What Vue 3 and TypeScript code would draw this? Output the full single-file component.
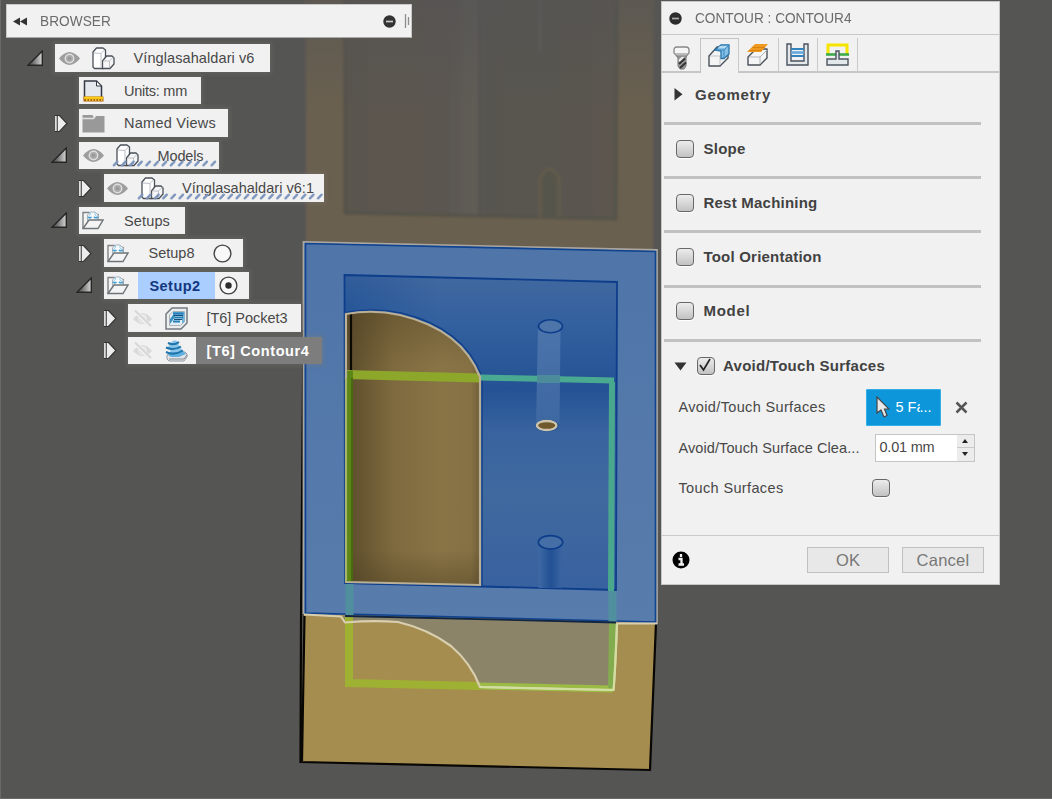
<script setup lang="ts">
import type { Directive } from 'vue'

interface TreeNode {
  label: string
  level: number
  arrow: 'open' | 'closed' | 'none'
  eye?: 'on' | 'off'
  icon: 'part' | 'units' | 'folder' | 'setup' | 'pocket' | 'contour'
  width: number
  text: number
  radio?: 'on' | 'off'
  linked?: boolean
  state?: 'active' | 'selected'
}

const nodes: TreeNode[] = [
  { label: 'Vínglasahaldari v6', level: 0, arrow: 'open', eye: 'on', icon: 'part', width: 215, text: 121 },
  { label: 'Units: mm', level: 1, arrow: 'none', icon: 'units', width: 122, text: 63 },
  { label: 'Named Views', level: 1, arrow: 'closed', icon: 'folder', width: 149, text: 92 },
  { label: 'Models', level: 1, arrow: 'open', eye: 'on', icon: 'part', width: 139.5, text: 46, linked: true },
  { label: 'Vínglasahaldari v6:1', level: 2, arrow: 'closed', eye: 'on', icon: 'part', width: 220.5, text: 132, linked: true },
  { label: 'Setups', level: 1, arrow: 'open', icon: 'setup', width: 105.5, text: 46 },
  { label: 'Setup8', level: 2, arrow: 'closed', icon: 'setup', width: 139.5, text: 46, radio: 'off' },
  { label: 'Setup2', level: 2, arrow: 'open', icon: 'setup', width: 145, text: 51, radio: 'on', state: 'active' },
  { label: '[T6] Pocket3', level: 3, arrow: 'closed', eye: 'off', icon: 'pocket', width: 172.5, text: 81 },
  { label: '[T6] Contour4', level: 3, arrow: 'closed', eye: 'off', icon: 'contour', width: 193.5, text: 103, state: 'selected' },
]

const sections = [
  { label: 'Slope', text: 42 },
  { label: 'Rest Machining', text: 114 },
  { label: 'Tool Orientation', text: 118 },
  { label: 'Model', text: 47 },
]

// Tracks a label out to a given width in pixels.
const vTrack: Directive<HTMLElement, number> = {
  mounted(el, { value }) {
    const count = (el.textContent ?? '').length
    el.style.letterSpacing = `${(value - el.getBoundingClientRect().width) / count}px`
  },
}
</script>

<template>
  <div class="stage">
    <svg class="scene" viewBox="0 0 1052 799" width="1052" height="799">
      <defs>
        <linearGradient id="wood" x1="0" x2="1" y1="0" y2="0">
          <stop offset="0" stop-color="#5b4c2d" />
          <stop offset=".14" stop-color="#695832" />
          <stop offset=".35" stop-color="#7e6a3e" />
          <stop offset=".7" stop-color="#897446" />
          <stop offset=".93" stop-color="#857144" />
          <stop offset="1" stop-color="#6f5d37" />
        </linearGradient>
        <linearGradient id="woodEnds" x1="0" x2="0" y1="0" y2="1">
          <stop offset="0" stop-color="#4a3c20" stop-opacity=".35" />
          <stop offset=".2" stop-color="#4a3c20" stop-opacity="0" />
          <stop offset=".87" stop-color="#4a3c20" stop-opacity="0" />
          <stop offset="1" stop-color="#4a3c20" stop-opacity=".4" />
        </linearGradient>
        <linearGradient id="floor" x1="0" x2="0" y1="0" y2="1">
          <stop offset="0" stop-color="#42699f" />
          <stop offset=".14" stop-color="#34619f" />
          <stop offset=".36" stop-color="#245294" />
          <stop offset=".5" stop-color="#38639e" />
          <stop offset=".7" stop-color="#40699f" />
          <stop offset="1" stop-color="#38629f" />
        </linearGradient>
        <radialGradient id="corner" cx="0" cy=".1" r=".35">
          <stop offset="0" stop-color="#184a91" stop-opacity=".5" />
          <stop offset="1" stop-color="#184a91" stop-opacity="0" />
        </radialGradient>
        <linearGradient id="rim" x1="0" x2="0" y1="0" y2="1">
          <stop offset="0" stop-color="#4f75a9" />
          <stop offset="1" stop-color="#587cab" />
        </linearGradient>
        <linearGradient id="pin" x1="0" x2="0" y1="0" y2="1">
          <stop offset="0" stop-color="#4f77ad" />
          <stop offset="1" stop-color="#3f69a3" />
        </linearGradient>
        <linearGradient id="pinLow" x1="0" x2="1" y1="0" y2="0">
          <stop offset="0" stop-color="#3e69a4" />
          <stop offset=".55" stop-color="#215093" />
          <stop offset="1" stop-color="#3963a1" />
        </linearGradient>
        <linearGradient id="ghostPocket" x1="0" x2="1" y1="0" y2="0">
          <stop offset="0" stop-color="#5a554e" />
          <stop offset=".38" stop-color="#5b5751" />
          <stop offset=".48" stop-color="#605d57" />
          <stop offset=".52" stop-color="#575550" />
          <stop offset="1" stop-color="#5b5750" />
        </linearGradient>
        <linearGradient id="haze" x1="0" x2="0" y1="0" y2="1">
          <stop offset="0" stop-color="#545454" stop-opacity=".6" />
          <stop offset="1" stop-color="#545454" stop-opacity="0" />
        </linearGradient>
        <filter id="soft" x="-20%" y="-20%" width="140%" height="140%"><feGaussianBlur stdDeviation="1.4" /></filter>
        <filter id="glow" x="-20%" y="-20%" width="140%" height="140%"><feGaussianBlur stdDeviation=".7" /></filter>
      </defs>
      <rect width="1052" height="799" fill="#555554" />
      <path d="M.5 0V799M0 798.500H1052" stroke="#6a6a6a" fill="none" />

      <g filter="url(#soft)">
        <path d="M306-5H653V256L306 248Z" fill="#6a604f" />
        <path d="M345-5H617L616 219L345 213Z" fill="url(#ghostPocket)" stroke="#535149" stroke-width="3" />
        <path d="M480-5V215" stroke="#54534f" stroke-width="3" />
        <path d="M540 217V178Q549 160 559 178V217" fill="#57544b" stroke="#645c4c" stroke-width="3" />
        <path d="M540-5V52" stroke="#605e58" stroke-width="3" />
      </g>
      <rect x="306" y="0" width="347" height="110" fill="url(#haze)" />

      <path d="M304 614L656 622L650 770L300.500 761.500Z" fill="#a58c4f" />
      <path d="M343 615.500L617 622L613.500 690L480 687Q470 663 450 646Q420 623 380 621L345 622.500Z" fill="#8b8468" />
      <path d="M303.500 330L301 620L300.500 762L650 770L656 623M304.500 616L302 761" fill="none" stroke="#080704" stroke-width="2.200" />

      <path d="M304 243L657 251V623L304 614Z" fill="url(#rim)" />
      <path d="M303.500 614V242L657 250V624" fill="none" stroke="#aaa6a0" stroke-width="1.800" />
      <path d="M305.500 613V243.500L655.500 251.500V622Z" fill="none" stroke="#104390" stroke-width="1.600" />
      <path d="M344.500 275L617 282L616 590L345 583Z" fill="url(#floor)" />
      <path d="M344.500 275L617 282L616 590L345 583Z" fill="url(#corner)" />
      <path d="M344.500 275L617 282L616 590L345 583Z" fill="none" stroke="#0e3e8b" stroke-width="1.800" />

      <path d="M538 327L560.500 330L559.500 424H536Z" fill="url(#pin)" opacity=".9" />
      <ellipse cx="550.500" cy="326.300" rx="12" ry="6.500" fill="#4d75aa" stroke="#0d3d8a" stroke-width="1.600" />
      <ellipse cx="547" cy="425.500" rx="11.500" ry="6" fill="#174485" />
      <ellipse cx="546.700" cy="425.500" rx="9.700" ry="4.500" fill="#70592b" stroke="#cdc4ad" stroke-width="2.300" />
      <path d="M538.500 547H561V588H538.500Z" fill="url(#pinLow)" />
      <ellipse cx="550.500" cy="542.300" rx="12.200" ry="6.700" fill="#446ea5" stroke="#0d3d8a" stroke-width="1.600" />

      <path d="M346 314Q373 309 400 315Q462 330 480.500 377V585L346 582Z" fill="url(#wood)" />
      <path d="M346 314Q373 309 400 315Q462 330 480.500 377V585L346 582Z" fill="url(#woodEnds)" />
      <path d="M351 314V582" stroke="#0b0a02" stroke-width="2.200" />
      <path d="M345 312.500Q373 307 401 313Q464 328 482 377V586L345 583" fill="none" stroke="#103f8b" stroke-width="1.400" />

      <g filter="url(#glow)" fill="none">
        <path d="M345 374.500L480 378" stroke="#8da72c" stroke-width="9" />
        <path d="M480 377.500L614 380.500" stroke="#4aaa91" stroke-width="6" />
        <path d="M537 379H560" stroke="#4b8b9a" stroke-width="8" />
        <path d="M349.500 371V582" stroke="#5c8714" stroke-width="7" />
        <path d="M349.500 584V616" stroke="#508f9e" stroke-width="8" />
        <path d="M612 382L611 591" stroke="#49a78d" stroke-width="6" />
        <path d="M612.500 591V622" stroke="#508f9e" stroke-width="8" />
        <path d="M349 617V683L480 686" stroke="#9eb132" stroke-width="8" />
        <path d="M480 686L613 689" stroke="#9abb44" stroke-width="7" />
        <path d="M612.500 623L611.500 688" stroke="#83ac50" stroke-width="7" />
      </g>
      <path d="M352 378V582" stroke="#38590c" stroke-width="1.200" />
      <path d="M346 314Q373 309 400 315Q462 330 480 377V585L346 582Z" fill="none" stroke="#bab097" stroke-width="2.200" />
      <path d="M346 378V582" stroke="#a7b56c" stroke-width="2" />
      <path d="M345 616L616 622.500" stroke="#122540" stroke-width="1.800" />
      <path d="M304 614.500L341 616.500L345 622.500Q373 620 398 622Q428 629 451 646Q471 663 480 687L613.500 690Q615 676 617 623.500H657" fill="none" stroke="#d9cfaf" stroke-width="2.200" stroke-linejoin="round" />
      <path d="M480 687L613.500 690Q615 676 617 624" fill="none" stroke="#d3dfa0" stroke-width="2" />
    </svg>

    <aside class="browser">
      <header class="browser-bar">
        <svg class="rewind" width="15" height="9" viewBox="0 0 15 9"><path d="M7 .500V8.500L0 4.500ZM14 .500V8.500L7 4.500Z" fill="#333" /></svg>
        <span v-track="71" class="caption">BROWSER</span>
        <svg class="minus" width="13" height="13" viewBox="0 0 13 13"><circle cx="6.500" cy="6.500" r="6.200" fill="#333" /><path d="M3 6.500H10" stroke="#ccc" stroke-width="1.700" /></svg>
        <svg class="grip" width="6" height="16" viewBox="0 0 6 16"><path d="M1.500 1V15M4.500 4V12" stroke="#8d8d8d" stroke-width="1.300" /></svg>
      </header>
      <ul class="tree">
        <li v-for="n in nodes" :key="n.label" :class="['row', `level-${n.level}`]">
          <span class="toggle">
            <svg v-if="n.arrow === 'open'" width="17" height="17" viewBox="0 0 17 17"><path d="M15.300 1V15.300H1Z" fill="url(#arrowFill)" stroke="#262626" stroke-width="1.400" /></svg>
            <svg v-else-if="n.arrow === 'closed'" class="shut" width="17" height="19" viewBox="0 0 17 19"><path d="M2.500 1.500H6.500L14 9.500L6.500 17.500H2.500Z" fill="#ededed" stroke="#333" stroke-width="1.200" /><path d="M2.700 2V17" stroke="#e6e6e6" stroke-width="1.300" /><path d="M4.300 2V17" stroke="#444" stroke-width="1.100" /></svg>
          </span>
          <div :class="['item', n.state]" :style="{ width: `${n.width}px` }">
            <svg v-if="n.linked" class="hatch" :width="n.width - 33" height="7">
              <defs><pattern :id="`hatch-${n.level}`" width="8.150" height="7" patternUnits="userSpaceOnUse"><path d="M1.800 5.300L5.300 1.700" stroke="#7d95bd" stroke-width="2.400" stroke-linecap="round" /></pattern></defs>
              <rect width="100%" height="7" :fill="`url(#hatch-${n.level})`" />
            </svg>
            <span v-if="n.eye" class="slot">
              <svg v-if="n.eye === 'on'" width="23" height="15" viewBox="0 0 23 15"><path d="M1 7.500Q11.500-5.500 22 7.500Q11.500 20.500 1 7.500Z" fill="#9d9d9d" /><circle cx="11.500" cy="7.500" r="4.200" fill="#aaa" stroke="#dedede" stroke-width="1.500" /><circle cx="11.500" cy="7.500" r="1.700" fill="#999" /></svg>
              <svg v-else width="23" height="19" viewBox="0 0 23 19"><path d="M2 10Q11.500-2 21 10Q11.500 20 2 10Z" fill="#dadada" /><circle cx="11.500" cy="9.500" r="3.500" fill="#dcdcdc" stroke="#efefef" stroke-width="1.300" /><path d="M3 .800L20 18" stroke="#f1f1f1" stroke-width="4" /><path d="M4 1.500L20 17" stroke="#d7d7d7" stroke-width="2" /></svg>
            </span>
            <span :class="['slot', { wide: n.eye }]">
              <svg v-if="n.icon === 'part'" width="23" height="23" viewBox="0 0 23 23"><g stroke="#4b5059" stroke-width="1.300" stroke-linejoin="round"><path d="M1 5L4.500 1H11L13.500 3V19L11 21.500H2.500L1 20Z" fill="#fff" /><path d="M10.500 14L14.500 9H20L22 11V17L18 21.500H10.500Z" fill="#f6f6f6" /></g><path d="M2 6L9 6.500L12.500 3M9 6.500V20M11.500 14H17.500L21 10.500M17.500 14V21" stroke="#bcc0c7" fill="none" /></svg>
              <svg v-else-if="n.icon === 'units'" width="21" height="22" viewBox="0 0 21 22"><path d="M1.500 19V1H13.500L18.500 6V19" fill="#e5e9ed" stroke="#343a45" stroke-width="1.500" /><path d="M13.500 1V6H18.500Z" fill="#fff" stroke="#343a45" /><rect x=".5" y="16.500" width="20" height="5" fill="#ae6200" /><path d="M1 17.800H20" stroke="#ffce13" stroke-width="2.200" /><path d="M3 20H20" stroke="#ffe04a" stroke-dasharray="1.500 1.500" stroke-width="1.500" /></svg>
              <svg v-else-if="n.icon === 'folder'" width="23" height="19" viewBox="0 0 23 19"><path d="M.500 1H10.500L12 4L14 2H22.500V18.500H.500Z" fill="#999" /><path d="M0 4.500H11.500L14 1.500" stroke="#e2e2e2" stroke-width="1.300" fill="none" /></svg>
              <svg v-else-if="n.icon === 'setup'" width="22" height="19" viewBox="0 0 22 19"><path d="M1 17.500V1.500H7L9 3.500H16V8.500" fill="#f3f3f3" stroke="#808386" stroke-width="1.400" /><path d="M5.500 10V4L8.500 1H13L16 4V10Z" fill="#f7fafc" stroke="#a5b3bd" /><path d="M6 6Q8 7.500 9.500 6M12 6Q14 7.500 16 6" fill="none" stroke="#4ba0d4" stroke-width="1.700" /><path d="M8.500 1V3L7 5M13 1.500V4L15 5.500" fill="none" stroke="#9acbe7" /><path d="M1 17.500L7 9H21L16 17.500Z" fill="#f4f4f4" stroke="#707477" stroke-width="1.400" /></svg>
              <svg v-else-if="n.icon === 'pocket'" width="23" height="23" viewBox="0 0 23 23"><path d="M1 7L7 1H22V16L16 22H1Z" fill="#eceded" stroke="#737b82" stroke-width="1.500" /><path d="M4.500 8L8 4.500H19.500V14.500L15.500 18.500H4.500Z" fill="#e2eef5" stroke="#abb2b7" /><path d="M8 5H19.500V15L17 17V8H8Z" fill="#72b3dc" /><path d="M8 6.500H18.500M7 10.500H18M8 14.500H15" stroke="#247fb8" stroke-width="2.200" /><path d="M8 8.500H18M9 12.500H17" stroke="#154f78" stroke-width="1" /><path d="M10 10L5 17V12L8 8Z" fill="#3d91c5" /></svg>
              <svg v-else width="23" height="23" viewBox="0 0 23 23"><path d="M2 16L7 13H20L22 15V18L19 22H4L2 20Z" fill="#e3e5e7" stroke="#949ca3" /><path d="M3 16L6 12H18L21 15L14 18H6Z" fill="#62b0df" /><path d="M6 4Q9-1 13 3L14 7L19 13H6L3 8Z" fill="#8bc6ea" /><path d="M3 4Q9 7 14 3M1 8.500Q9 12 16 7.500M1 13Q9 17 18 11.500" fill="none" stroke="#1e74ab" stroke-width="2" /><path d="M4 20H19L22 16" fill="none" stroke="#858d94" /></svg>
            </span>
            <span class="label"><span v-track="n.text" class="name">{{ n.label }}</span></span>
            <svg v-if="n.radio" class="radio" width="19" height="19" viewBox="0 0 19 19"><circle cx="9.500" cy="9.500" r="8.400" fill="#f8f8f8" stroke="#444" stroke-width="1.400" /><circle v-if="n.radio === 'on'" cx="9.500" cy="9.500" r="3.200" fill="#2d2d2d" /></svg>
          </div>
        </li>
      </ul>
      <svg class="defs" width="0" height="0"><defs><linearGradient id="arrowFill"><stop offset=".3" stop-color="#666" /><stop offset="1" stop-color="#d8d8d8" /></linearGradient></defs></svg>
    </aside>

    <section class="dialog">
      <header class="title">
        <svg class="minus" width="13" height="13" viewBox="0 0 13 13"><circle cx="6.500" cy="6.500" r="6.200" fill="#2d2d2d" /><path d="M3 6.500H10" stroke="#aaa" stroke-width="1.700" /></svg>
        <span v-track="156.500" class="caption">CONTOUR : CONTOUR4</span>
      </header>
      <nav class="tabs">
        <span class="tab first">
          <svg width="17" height="24" viewBox="0 0 17 24"><path d="M3 9L5 12V20L7 23H11L13 20V12L14 9Z" fill="#999" stroke="#777" /><path d="M6 18L12 12.500M7 22L13 16.500" stroke="#333" stroke-width="2" /><path d="M6 15L11 10" stroke="#eee" stroke-width="2" /><path d="M1 4Q1 1 4 1H13Q16 1 16 4V7L13 10H4L1 7Z" fill="#f5f5f5" stroke="#888" stroke-width="1.300" /><path d="M2 7H15L13 9H4Z" fill="#bbb" /></svg>
        </span>
        <span class="tab active">
          <svg width="22" height="23" viewBox="0 0 22 23"><path d="M1 12L9 3H20V14L12 22H1Z" fill="#f4f4f4" stroke="#4b515b" stroke-width="1.400" stroke-linejoin="round" /><path d="M2 12H12V21M12 12L20 4" fill="none" stroke="#c2c5ca" /><path d="M7 6L13 .800H21V10L16 14.500H13V7Z" fill="#86bfe6" stroke="#2874aa" stroke-width="1.300" /><path d="M8 6H16L20 2M16 6V14" fill="none" stroke="#398abf" /><path d="M12 2H19L17 4H10Z" fill="#b5daf1" /></svg>
        </span>
        <span class="tab">
          <svg width="22" height="23" viewBox="0 0 22 23"><path d="M1 14L9 6H20V15L13 22H1Z" fill="#f5f5f5" stroke="#4b515b" stroke-width="1.400" stroke-linejoin="round" /><path d="M2 14H13V21M13 14L20 7" fill="none" stroke="#aeb3bb" /><path d="M0 9L8 1H21L14 9Z" fill="#ef9a20" /><path d="M2 7.500H15M5.500 4.500H18" stroke="#d97f08" stroke-width=".9" /></svg>
        </span>
        <span class="tab">
          <svg width="23" height="23" viewBox="0 0 23 23"><path d="M1 1H5V18H18V1H22V22H1Z" fill="#e5e8eb" stroke="#49525e" stroke-width="1.400" /><path d="M5 6H18M5 13H18" stroke="#3482be" stroke-width="1.800" /><path d="M5 9.500H18" stroke="#64a8df" stroke-width="2.600" /></svg>
        </span>
        <span class="tab">
          <svg width="23" height="23" viewBox="0 0 23 23"><path d="M2 12V2H21V12" fill="none" stroke="#f5e400" stroke-width="3" /><path d="M0 11.500H23" stroke="#3dab4b" stroke-width="2.600" /><path d="M10 8H13V16H22V22H1V16H10Z" fill="#e5e8eb" stroke="#4c5561" stroke-width="1.400" /></svg>
        </span>
      </nav>
      <div class="body">
        <div class="section">
          <svg class="tri" width="9" height="13" viewBox="0 0 9 13"><path d="M.500 0L8.500 6.200L.500 12.500Z" fill="#333" /></svg>
          <b v-track="76" class="heading">Geometry</b>
        </div>
        <div v-for="s in sections" :key="s.label" class="section">
          <i class="check" />
          <b v-track="s.text" class="heading">{{ s.label }}</b>
        </div>
        <div class="section expanded">
          <svg class="down" width="13" height="9" viewBox="0 0 13 9"><path d="M.500 .500H12.500L6.500 8.500Z" fill="#333" /></svg>
          <i class="check checked"><svg width="16" height="16" viewBox="0 0 16 16"><path d="M3 8L6.500 13L13 2" fill="none" stroke="#222" stroke-width="1.700" /></svg></i>
          <b v-track="162" class="heading">Avoid/Touch Surfaces</b>
        </div>
        <div class="field">
          <span class="field-name"><span v-track="147">Avoid/Touch Surfaces</span></span>
          <div class="picker">
            <svg width="14" height="22" viewBox="0 0 14 22"><path d="M1 1V17L5 14L8 21L11 19.500L8.500 13H13Z" fill="#e9e9e9" stroke="#41464a" stroke-width="1.200" /></svg>
            <span class="picker-text"><span class="clip">5 Fa</span>...</span>
          </div>
          <svg class="clear" width="13" height="13" viewBox="0 0 13 13"><path d="M1.500 1.500L11.500 11.500M11.500 1.500L1.500 11.500" stroke="#555" stroke-width="2.500" /></svg>
        </div>
        <div class="field">
          <span class="field-name"><span v-track="181">Avoid/Touch Surface Clea...</span></span>
          <div class="number">
            <span class="value"><span v-track="55">0.01 mm</span></span>
            <span class="spin"><i class="up" /><i class="dn" /></span>
          </div>
        </div>
        <div class="field">
          <span class="field-name"><span v-track="105">Touch Surfaces</span></span>
          <i class="check" />
        </div>
      </div>
      <footer class="actions">
        <svg width="18" height="18" viewBox="0 0 18 18"><circle cx="9" cy="9" r="8.500" /><path d="M9 3V6M6.500 8H9.500V13.500M6.500 13.500H12" stroke="#f1f1f1" stroke-width="2.300" fill="none" /></svg>
        <button class="button ok" type="button"><span v-track="24">OK</span></button>
        <button class="button" type="button"><span v-track="53">Cancel</span></button>
      </footer>
    </section>
  </div>
</template>

<style>
body { margin: 0; overflow: hidden; }
</style>

<style scoped>
.stage { position: relative; width: 1052px; height: 799px; overflow: hidden; font: 14.500px/18px "Liberation Sans", Arial, sans-serif; color: #484848; }
.stage * { box-sizing: border-box; }
.stage svg { display: block; flex: none; }
.scene { position: absolute; inset: 0; }
.caption { display: inline-block; font-size: 15px; color: #6b6b6b; white-space: nowrap; transform: scaleX(.91); transform-origin: left; margin-top: -1px; }

.browser { position: absolute; left: 6px; top: 4px; width: 406px; }
.browser-bar { display: flex; align-items: center; height: 34px; padding: 0 1px 0 6px; background: #f1f1f1; border: 1px solid #c9c9c9; border-bottom-color: #aaa; }
.browser-bar .caption { margin-left: 12px; }
.browser-bar .minus { margin-left: auto; }
.grip { margin-left: 8px; }
.tree { list-style: none; margin: 6.300px 0 0; padding: 0; }
.row { display: flex; align-items: center; height: 27.500px; margin-bottom: 5px; }
.level-0 { padding-left: 21px; }
.level-1 { padding-left: 45px; }
.level-2 { padding-left: 69.500px; }
.level-3 { padding-left: 94px; }
.toggle { width: 28px; flex: none; }
.shut { margin-left: 1.500px; }
.item { position: relative; display: flex; align-items: center; height: 27.500px; background: #f1f1f1; box-shadow: 0 0 4px 2px rgba(125, 125, 120, .3); }
.slot { display: flex; justify-content: center; width: 28px; flex: none; }
.slot.wide { width: 41px; }
.label { display: flex; align-items: center; height: 100%; padding-left: 17px; white-space: nowrap; }
.wide + .label { padding-left: 9.500px; }
.radio { margin-left: 18.500px; }
.active .label { width: 77px; margin-left: 6px; padding-left: 12px; background: #aaceff; color: #12377e; font-weight: bold; }
.active .radio { margin-left: 4.500px; }
.selected { background: linear-gradient(90deg, #f1f1f1 68px, #7d7d7d 68px); }
.selected .label { color: #fff; font-weight: bold; }
.hatch { position: absolute; left: 33px; bottom: 2px; }
.defs { position: absolute; }

.dialog { position: absolute; left: 661px; top: 1px; width: 338.500px; height: 584px; display: flex; flex-direction: column; background: #f1f1f1; border: 1.500px solid #c6c6c6; }
.title { display: flex; align-items: center; height: 33px; padding-left: 7px; border-bottom: 1px solid #c9c9c9; }
.title .caption { margin-left: 13px; }
.tabs { display: flex; align-items: flex-end; height: 38px; box-shadow: inset 0 -2px #c6c6c6; }
.tab { display: flex; align-items: center; justify-content: center; width: 39.500px; height: 35px; border-right: 1.500px solid #c9c9c9; }
.tab.first { width: 37.500px; border-right: 0; padding-left: 2px; padding-top: 4px; }
.tab.active { background: #f1f1f1; border-left: 1.500px solid #c2c2c2; border-top: 1.500px solid #c2c2c2; padding-bottom: 2px; }
.tab:not(.active, .first) { border-bottom: 2px solid #c6c6c6; }
.body { flex: 1; margin-top: -2.200px; padding-left: 2px; }
.section { display: flex; align-items: center; width: 317px; height: 54.200px; padding: 0 0 3.500px 12px; border-bottom: 3.500px solid #c1c1c1; }
.tabs { position: relative; }
.section .tri { margin: 0 12px 0 -2px; }
.section.expanded { border-bottom: 0; height: 45px; padding: 3.500px 0 0 10px; }
.heading { white-space: nowrap; color: #424242; font-size: 15px; }
.check { display: block; width: 18px; height: 18px; border: 1.500px solid #686868; border-radius: 4px; background: linear-gradient(#ececec, #c2c2c2); box-shadow: 0 1px 1px #fff; flex: none; }
.section .check { margin-right: 9.500px; }
.section .check.checked { margin: 0 8px 0 10px; }
.checked svg { margin: -1px; }
.field { display: flex; align-items: center; height: 40.600px; padding-left: 14.500px; }
.field-name { width: 187px; flex: none; white-space: nowrap; }
.picker { display: flex; align-items: center; width: 75px; height: 37px; padding-left: 9px; background: #0d96da; border: 1px solid #35aeea; border-radius: 1px; color: #fff; }
.picker-text { display: flex; margin-left: 6px; }
.clip { width: 24px; overflow: hidden; white-space: nowrap; }
.clear { margin-left: 14px; }
.number { display: flex; width: 100px; height: 28px; margin-left: 9px; background: #fff; border: 1.500px solid #c5c5c5; }
.value { flex: 1; padding: 3px 0 0 4px; white-space: nowrap; }
.spin { display: flex; flex-direction: column; width: 17px; gap: 1px; background: #c9c9c9; }
.spin i { display: flex; flex: 1; align-items: center; justify-content: center; background: #ececec; }
.spin i::after { content: ""; border: 3px solid transparent; border-bottom: 4px solid #222; border-top: 0; }
.spin .dn::after { border-top: 4px solid #222; border-bottom: 0; }
.field > .check { margin-left: 6px; }
.actions { display: flex; align-items: center; height: 49px; padding: 0 14.500px 0 10px; border-top: 1.500px solid #c9c9c9; }
.button { width: 82px; height: 26px; padding: 0; background: #e8e8e8; border: 1.500px solid #c0c0c0; color: #777; font: 16.500px/20px "Liberation Sans", Arial, sans-serif; }
.ok { margin: 0 13px 0 auto; }
</style>
